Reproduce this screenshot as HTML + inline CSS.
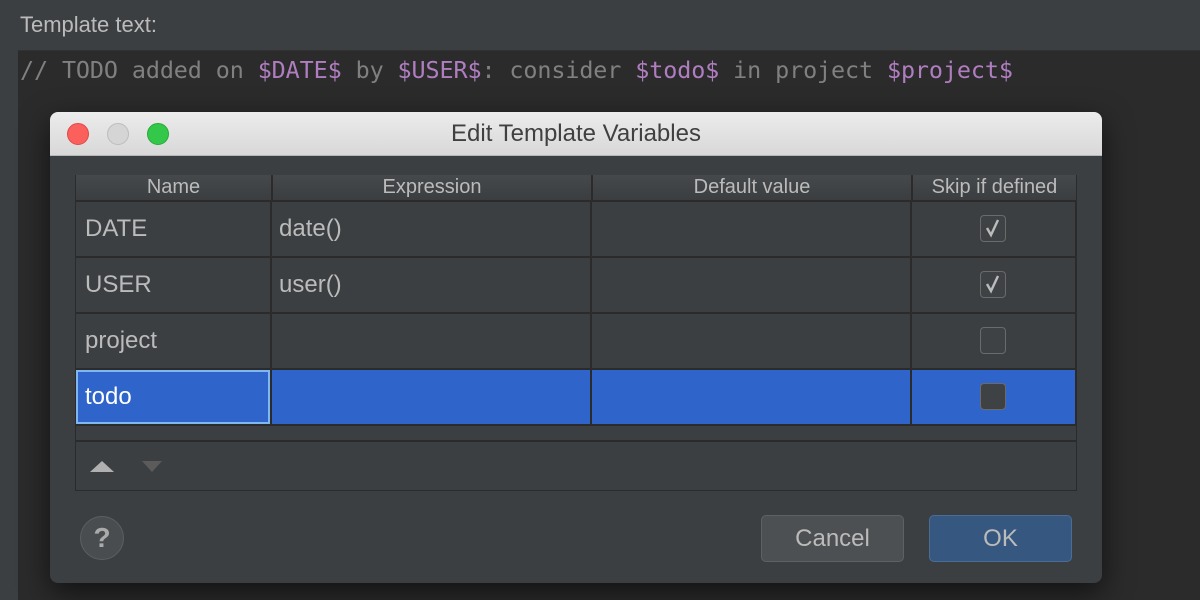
<!DOCTYPE html>
<html><head><style>
*{margin:0;padding:0;box-sizing:border-box}
body{width:1200px;height:600px;background:#3c3f41;position:relative;overflow:hidden;font-family:"Liberation Sans",sans-serif;color:#bbbbbb}
.abs{position:absolute}
#editor{left:18px;top:50px;width:1182px;height:550px;background:#2b2b2b;border-top:1px solid #323232}
#code{left:20px;top:56px;font-family:"DejaVu Sans Mono","Liberation Mono",monospace;font-size:23.4px;color:#808080;white-space:pre;letter-spacing:-0.1px}
#code b{font-weight:normal;color:#b07ec0}
#dlg{left:50px;top:112px;width:1052px;height:471px;background:#3c3f41;border-radius:8px;overflow:hidden;box-shadow:0 10px 30px rgba(0,0,0,.6)}
#title{left:0;top:0;width:1052px;height:44px;background:linear-gradient(#ececec,#d8d8d8);border-bottom:1px solid #b8b8b8;color:#404040;font-size:24px;text-align:center;line-height:44px}
.dot{width:22px;height:22px;border-radius:50%;top:11px}
.cell{position:absolute;font-size:24px;color:#bbbbbb;line-height:54px;padding-left:9px}
.hd{position:absolute;top:0;height:25px;font-size:20px;line-height:25px;text-align:center;color:#bbbbbb;background:linear-gradient(#45494b,#3b3e40)}
.cb{position:absolute;width:26px;height:27px;border:1.5px solid #6a6a6a;border-radius:4px;background:#3f4244}
</style></head><body>
<div class="abs" style="left:20px;top:12px;font-size:22px;color:#bbbbbb">Template text:</div>
<div id="editor" class="abs"></div>
<div id="code" class="abs">// TODO added on <b>$DATE$</b> by <b>$USER$</b>: consider <b>$todo$</b> in project <b>$project$</b></div>

<div id="dlg" class="abs">
 <div id="title" class="abs">Edit Template Variables</div>
 <div class="abs dot" style="left:17px;background:#fc605c;border:1px solid #de4a45"></div>
 <div class="abs dot" style="left:57px;background:#d5d5d5;border:1px solid #bdbdbd"></div>
 <div class="abs dot" style="left:97px;background:#34c84a;border:1px solid #27aa35"></div>
 <div class="abs" style="left:25px;top:63px;width:1002px;height:316px;background:#2b2b2b">
  <div class="hd" style="left:1px;width:195px">Name</div>
  <div class="hd" style="left:198px;width:318px">Expression</div>
  <div class="hd" style="left:518px;width:318px">Default value</div>
  <div class="hd" style="left:838px;width:163px">Skip if defined</div>
 </div>
</div>
<div class="abs" style="left:76px;top:202px;width:1000px;height:222px">
 <div class="abs" style="left:0;top:0;width:194px;height:54px;background:#3c3f41"></div>
 <div class="abs" style="left:196px;top:0;width:318px;height:54px;background:#3c3f41"></div>
 <div class="abs" style="left:516px;top:0;width:318px;height:54px;background:#3c3f41"></div>
 <div class="abs" style="left:836px;top:0;width:163px;height:54px;background:#3c3f41"></div>
 <div class="abs" style="left:0;top:56px;width:194px;height:54px;background:#3c3f41"></div>
 <div class="abs" style="left:196px;top:56px;width:318px;height:54px;background:#3c3f41"></div>
 <div class="abs" style="left:516px;top:56px;width:318px;height:54px;background:#3c3f41"></div>
 <div class="abs" style="left:836px;top:56px;width:163px;height:54px;background:#3c3f41"></div>
 <div class="abs" style="left:0;top:112px;width:194px;height:54px;background:#3c3f41"></div>
 <div class="abs" style="left:196px;top:112px;width:318px;height:54px;background:#3c3f41"></div>
 <div class="abs" style="left:516px;top:112px;width:318px;height:54px;background:#3c3f41"></div>
 <div class="abs" style="left:836px;top:112px;width:163px;height:54px;background:#3c3f41"></div>
 <div class="abs" style="left:0;top:168px;width:194px;height:54px;background:#2f65ca;border:2px solid #7fb8f0"></div>
 <div class="abs" style="left:196px;top:168px;width:318px;height:54px;background:#2f65ca"></div>
 <div class="abs" style="left:516px;top:168px;width:318px;height:54px;background:#2f65ca"></div>
 <div class="abs" style="left:836px;top:168px;width:163px;height:54px;background:#2f65ca"></div>

 <div class="cell" style="left:0;top:0">DATE</div>
 <div class="cell" style="left:194px;top:0">date()</div>
 <div class="cell" style="left:0;top:56px">USER</div>
 <div class="cell" style="left:194px;top:56px">user()</div>
 <div class="cell" style="left:0;top:112px">project</div>
 <div class="cell" style="left:0;top:168px;color:#fff">todo</div>

 <div class="cb" style="left:904px;top:13px"><svg width="24" height="24" style="position:absolute;left:0;top:0"><path d="M6 12 L10 19 L17 4" stroke="#bbb" stroke-width="2.4" fill="none"/></svg></div>
 <div class="cb" style="left:904px;top:69px"><svg width="24" height="24" style="position:absolute;left:0;top:0"><path d="M6 12 L10 19 L17 4" stroke="#bbb" stroke-width="2.4" fill="none"/></svg></div>
 <div class="cb" style="left:904px;top:125px"></div>
 <div class="cb" style="left:904px;top:181px"></div>
</div>
<div class="abs" style="left:76px;top:426px;width:1000px;height:14px;background:#3c3f41"></div>
<div class="abs" style="left:76px;top:442px;width:1000px;height:48px;background:#3c3f41"></div>
<svg class="abs" style="left:88px;top:455px" width="80" height="20"><path d="M2 17 L14 6 L26 17Z" fill="#b0b0b0"/><path d="M54 6 L74 6 L64 17Z" fill="#5b5b5b"/></svg>
<div class="abs" style="left:80px;top:516px;width:44px;height:44px;border-radius:50%;background:#4a4d4f;border:1.5px solid #5c5f61;color:#aaa;font-size:28px;font-weight:bold;text-align:center;line-height:42px">?</div>
<div class="abs" style="left:761px;top:515px;width:143px;height:47px;border-radius:5px;background:#4c5052;border:1.5px solid #5e6163;font-size:24px;text-align:center;line-height:46px;color:#bbbbbb">Cancel</div>
<div class="abs" style="left:929px;top:515px;width:143px;height:47px;border-radius:5px;background:#365880;border:1.5px solid #4a6d96;font-size:24px;text-align:center;line-height:46px;color:#bbbbbb">OK</div>
</body></html>
